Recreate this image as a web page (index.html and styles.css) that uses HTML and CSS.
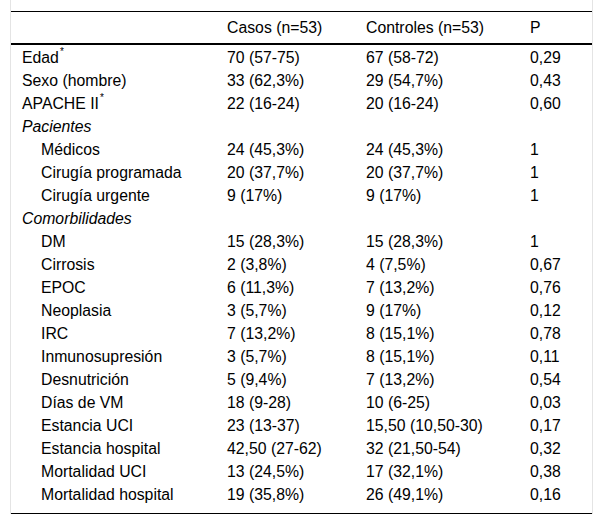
FILE: index.html
```html
<!DOCTYPE html>
<html lang="es">
<head>
<meta charset="utf-8">
<title>Tabla</title>
<link rel="stylesheet" href="styles.css">
</head>
<body>
<div class="frame">
  <table class="data">
    <colgroup>
      <col class="c1"><col class="c2"><col class="c3"><col class="c4">
    </colgroup>
    <thead>
      <tr><th></th><th>Casos (n=53)</th><th>Controles (n=53)</th><th>P</th></tr>
    </thead>
    <tbody>
      <tr><td>Edad<sup>*</sup></td><td>70 (57-75)</td><td>67 (58-72)</td><td>0,29</td></tr>
      <tr><td>Sexo (hombre)</td><td>33 (62,3%)</td><td>29 (54,7%)</td><td>0,43</td></tr>
      <tr><td>APACHE II<sup>*</sup></td><td>22 (16-24)</td><td>20 (16-24)</td><td>0,60</td></tr>
      <tr><td class="group" colspan="4">Pacientes</td></tr>
      <tr><td class="sub">Médicos</td><td>24 (45,3%)</td><td>24 (45,3%)</td><td>1</td></tr>
      <tr><td class="sub">Cirugía programada</td><td>20 (37,7%)</td><td>20 (37,7%)</td><td>1</td></tr>
      <tr><td class="sub">Cirugía urgente</td><td>9 (17%)</td><td>9 (17%)</td><td>1</td></tr>
      <tr><td class="group" colspan="4">Comorbilidades</td></tr>
      <tr><td class="sub">DM</td><td>15 (28,3%)</td><td>15 (28,3%)</td><td>1</td></tr>
      <tr><td class="sub">Cirrosis</td><td>2 (3,8%)</td><td>4 (7,5%)</td><td>0,67</td></tr>
      <tr><td class="sub">EPOC</td><td>6 (11,3%)</td><td>7 (13,2%)</td><td>0,76</td></tr>
      <tr><td class="sub">Neoplasia</td><td>3 (5,7%)</td><td>9 (17%)</td><td>0,12</td></tr>
      <tr><td class="sub">IRC</td><td>7 (13,2%)</td><td>8 (15,1%)</td><td>0,78</td></tr>
      <tr><td class="sub">Inmunosupresión</td><td>3 (5,7%)</td><td>8 (15,1%)</td><td>0,11</td></tr>
      <tr><td class="sub">Desnutrición</td><td>5 (9,4%)</td><td>7 (13,2%)</td><td>0,54</td></tr>
      <tr><td class="sub">Días de VM</td><td>18 (9-28)</td><td>10 (6-25)</td><td>0,03</td></tr>
      <tr><td class="sub">Estancia UCI</td><td>23 (13-37)</td><td>15,50 (10,50-30)</td><td>0,17</td></tr>
      <tr><td class="sub">Estancia hospital</td><td>42,50 (27-62)</td><td>32 (21,50-54)</td><td>0,32</td></tr>
      <tr><td class="sub">Mortalidad UCI</td><td>13 (24,5%)</td><td>17 (32,1%)</td><td>0,38</td></tr>
      <tr class="last"><td class="sub">Mortalidad hospital</td><td>19 (35,8%)</td><td>26 (49,1%)</td><td>0,16</td></tr>
    </tbody>
  </table>
</div>
</body>
</html>
```

FILE: styles.css
```css
html, body {
  margin: 0;
  padding: 0;
  background: #fff;
}

.frame {
  margin-left: 10px;
  width: 583px;
  box-sizing: border-box;
  padding-top: 11px;
  border-left: 1px solid #e4e4e4;
  border-right: 1px solid #e4e4e4;
}

.data {
  width: 581px;
  table-layout: fixed;
  border-collapse: collapse;
  font-family: "Liberation Sans", Arial, sans-serif;
  font-size: 15.8px;
  color: #000;
}

.c1 { width: 205px; }
.c2 { width: 139px; }
.c3 { width: 164px; }
.c4 { width: 73px; }

.data th,
.data td {
  text-align: left;
  font-weight: normal;
  padding: 0 0 0 11px;
  height: 23px;
  line-height: 23px;
  white-space: nowrap;
  vertical-align: top;
}

.data thead th {
  border-top: 1px solid #000;
  border-bottom: 2px solid #000;
  padding-top: 4px;
  padding-bottom: 4px;
}

.data tbody tr:first-child td {
  padding-top: 1px;
}

.data td.sub {
  padding-left: 30px;
}

.data td.group {
  font-style: italic;
}

.data tr.last td {
  padding-bottom: 7px;
  border-bottom: 1px solid #000;
}

.data sup {
  font-size: 10px;
  line-height: 0;
  vertical-align: 8px;
  margin-left: 1px;
}
```
